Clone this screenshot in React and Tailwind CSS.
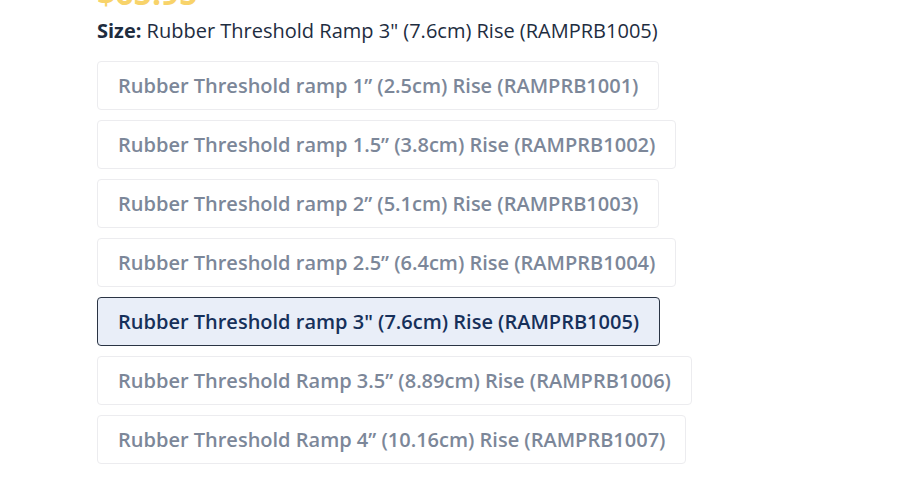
import { useState } from 'react';

const sizes = [
    { label: 'Rubber Threshold ramp 1” (2.5cm) Rise (RAMPRB1001)' },
    { label: 'Rubber Threshold ramp 1.5” (3.8cm) Rise (RAMPRB1002)' },
    { label: 'Rubber Threshold ramp 2” (5.1cm) Rise (RAMPRB1003)' },
    { label: 'Rubber Threshold ramp 2.5” (6.4cm) Rise (RAMPRB1004)' },
    { label: 'Rubber Threshold ramp 3" (7.6cm) Rise (RAMPRB1005)', title: 'Rubber Threshold Ramp 3" (7.6cm) Rise (RAMPRB1005)' },
    { label: 'Rubber Threshold Ramp 3.5” (8.89cm) Rise (RAMPRB1006)' },
    { label: 'Rubber Threshold Ramp 4” (10.16cm) Rise (RAMPRB1007)' },
];

export default function App() {
    const [selected, setSelected] = useState(4);
    const current = sizes[selected];

    return (
        <div className="min-h-screen bg-white overflow-hidden font-['Open_Sans',sans-serif]">
            <div className="pl-[97px]">
                {/* price line, scrolled mostly out of view */}
                <div className="h-[9px] overflow-hidden relative">
                    <span className="absolute left-0 bottom-[3px] text-[32px] leading-[32px] font-bold text-[#f8d36a] translate-y-[3px]">$65.95</span>
                </div>
                <div className="mt-[9px] text-[20px] leading-[26px] text-[#1e2d3f]">
                    <span className="font-bold">Size:</span> {current.title || current.label}
                </div>
                <div className="mt-[17px] flex flex-col items-start gap-[10px]">
                    {sizes.map((item, index) => (
                        <button
                            key={index}
                            onClick={() => setSelected(index)}
                            className={
                                index === selected
                                    ? 'h-[49px] px-[20px] rounded-[4px] border border-[#2a3444] bg-[#e9eef8] text-[#16305a] text-[20px] font-semibold'
                                    : 'h-[49px] px-[20px] rounded-[4px] border border-[#ececef] bg-white text-[#7c8799] text-[20px] font-semibold'
                            }
                        >
                            {item.label}
                        </button>
                    ))}
                </div>
            </div>
        </div>
    );
}
